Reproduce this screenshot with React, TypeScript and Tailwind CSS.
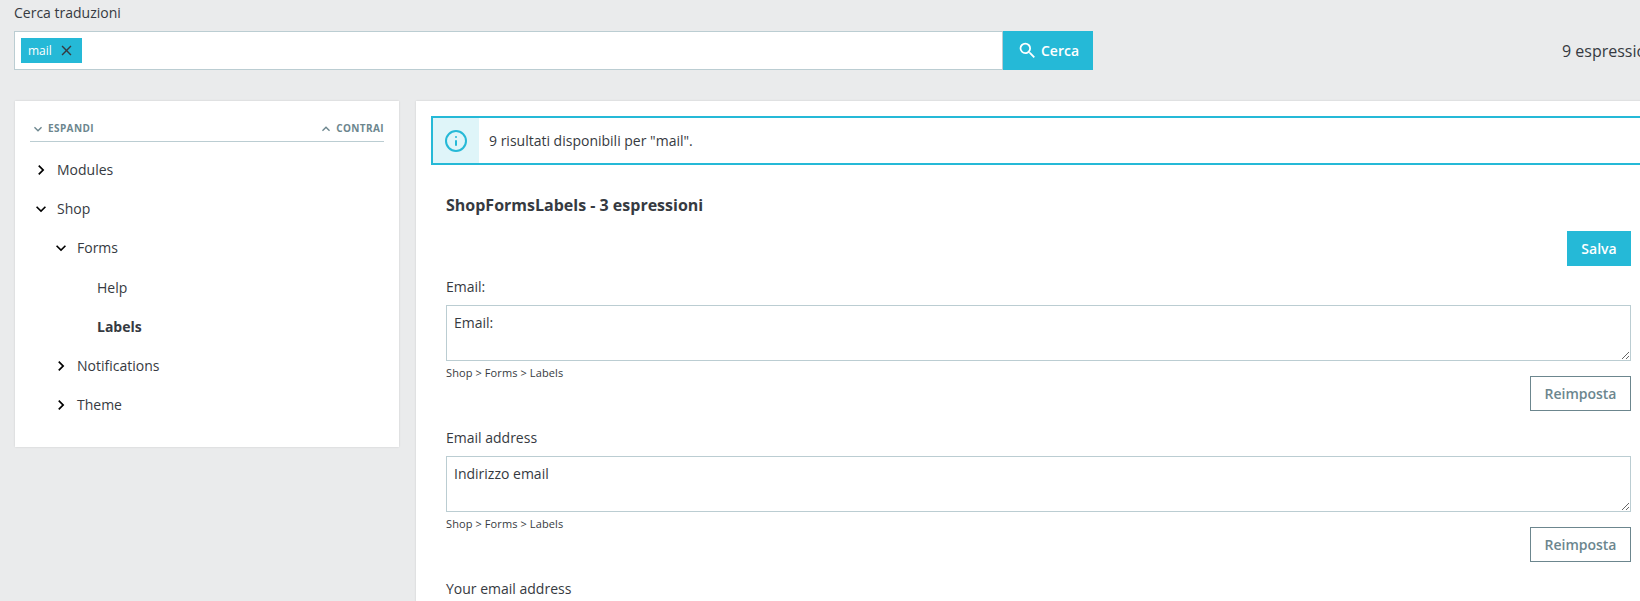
import { Info } from 'lucide-react';

// Material icon paths, the lucide ones are too thin / rounded for this page
const ARROW_RIGHT = 'M8.59 16.59L13.17 12 8.59 7.41 10 6l6 6-6 6z';
const ARROW_DOWN = 'M7.41 8.59L12 13.17l4.59-4.58L18 10l-6 6-6-6z';
const ARROW_UP = 'M7.41 15.41L12 10.83l4.59 4.58L18 14l-6-6-6 6z';
const CLOSE = 'M19 6.41L17.59 5 12 10.59 6.41 5 5 6.41 10.59 12 5 17.59 6.41 19 12 13.41 17.59 19 19 17.59 13.41 12z';
const SEARCH =
  'M15.5 14h-.79l-.28-.27A6.471 6.471 0 0 0 16 9.5 6.5 6.5 0 1 0 9.5 16c1.61 0 3.09-.59 4.23-1.57l.27.28v.79l5 4.99L20.49 19l-4.99-5zm-6 0C7.01 14 5 11.99 5 9.5S7.01 5 9.5 5 14 7.01 14 9.5 11.99 14 9.5 14z';

function Icon({ d, size, className }: { d: string; size: number; className?: string }) {
  return (
    <svg width={size} height={size} viewBox="0 0 24 24" fill="currentColor" className={className}>
      <path d={d} />
    </svg>
  );
}

function TreeRow({ label, indent, open, bold }: { label: string; indent: string; open?: boolean; bold?: boolean }) {
  return (
    <div className={`flex items-center h-[39.2px] ${indent}`}>
      <span className="w-[24px] flex items-center justify-start">
        {open === undefined ? null : (
          <Icon d={open ? ARROW_DOWN : ARROW_RIGHT} size={20} className="text-black -ml-[2px]" />
        )}
      </span>
      <span className={bold ? 'font-bold' : ''}>{label}</span>
    </div>
  );
}

function Expression({ label, value }: { label: string; value?: string }) {
  return (
    <div className="h-[151px]">
      <div className="h-[39px] pt-[11px] leading-[20px]">{label}</div>
      {value !== undefined && (
        <>
          <textarea
            defaultValue={value}
            className="block w-full h-[56px] border border-[#bbcdd2] px-[7px] py-[7px] leading-[20px] outline-none text-[#363a41]"
          />
          <div className="flex justify-between">
            <span className="text-[11px] leading-[14px] mt-[5px] tracking-[0.1px]">Shop &gt; Forms &gt; Labels</span>
            <button className="w-[101px] h-[35px] mt-[15px] border border-[#6c868e] text-[#6c868e] font-semibold">
              Reimposta
            </button>
          </div>
        </>
      )}
    </div>
  );
}

export default function App() {
  return (
    <div className="h-[601px] w-[1640px] overflow-hidden bg-[#eaebec] text-[#363a41] text-sm font-['Open_Sans',sans-serif]">
      {/* Search bar */}
      <div className="pl-[14px] pt-[3px] leading-[20px]">Cerca traduzioni</div>
      <div className="flex items-center h-[39px] mt-[8px] pl-[14px]">
        <div className="w-[989px] h-[39px] shrink-0 bg-white border border-[#bbcdd2] flex items-center pl-[6px]">
          <span className="flex items-center h-[25px] w-[61px] bg-[#25b9d7] text-white text-[12px] pl-[7px]">
            mail
            <Icon d={CLOSE} size={17} className="text-[#363a41] ml-[6px]" />
          </span>
        </div>
        <button className="flex items-center pl-[14px] gap-[3px] w-[90px] h-[39px] shrink-0 bg-[#25b9d7] text-white font-semibold">
          <Icon d={SEARCH} size={21} />
          Cerca
        </button>
        <span className="ml-[469px] text-base whitespace-nowrap">9 espressioni</span>
      </div>

      <div className="flex items-start gap-[17px] mt-[31px] pl-[15px]">
        {/* Tree panel */}
        <div className="w-[384px] h-[346px] shrink-0 bg-white px-[15px] pt-[15px] shadow-[0_0_2px_rgba(0,0,0,0.12)]">
          <div className="flex justify-between items-center h-[26px] border-b border-[#bbcdd2] text-[10px] font-bold uppercase tracking-[0.4px] text-[#6c868e]">
            <span className="flex items-center gap-[2px]">
              <Icon d={ARROW_DOWN} size={16} />
              Espandi
            </span>
            <span className="flex items-center gap-[2px]">
              <Icon d={ARROW_UP} size={16} />
              Contrai
            </span>
          </div>
          <div className="pt-[8.5px] pl-[3px]">
            <TreeRow label="Modules" indent="" open={false} />
            <TreeRow label="Shop" indent="" open />
            <TreeRow label="Forms" indent="pl-[20px]" open />
            <TreeRow label="Help" indent="pl-[40px]" />
            <TreeRow label="Labels" indent="pl-[40px]" bold />
            <TreeRow label="Notifications" indent="pl-[20px]" open={false} />
            <TreeRow label="Theme" indent="pl-[20px]" open={false} />
          </div>
        </div>

        {/* Results panel */}
        <div className="w-[1300px] h-[520px] shrink-0 bg-white pl-[15px] pt-[15px] shadow-[0_0_2px_rgba(0,0,0,0.12)]">
          <div className="flex h-[49px] w-[1270px] border-2 border-[#25b9d7]">
            <div className="w-[46px] bg-[#dff5f9] flex items-center justify-center">
              <Info size={24} strokeWidth={2} className="text-[#25b9d7]" />
            </div>
            <div className="flex items-center pl-[10px]">9 risultati disponibili per "mail".</div>
          </div>
          <div className="w-[1185px] ml-[15px]">
            <h2 className="mt-[28px] text-base leading-[24px] font-bold">ShopFormsLabels - 3 espressioni</h2>
            <div className="flex justify-end mt-[14px]">
              <button className="w-[64px] h-[35px] bg-[#25b9d7] text-white font-semibold">Salva</button>
            </div>
            <Expression label="Email:" value="Email:" />
            <Expression label="Email address" value="Indirizzo email" />
            <Expression label="Your email address" />
          </div>
        </div>
      </div>
    </div>
  );
}
